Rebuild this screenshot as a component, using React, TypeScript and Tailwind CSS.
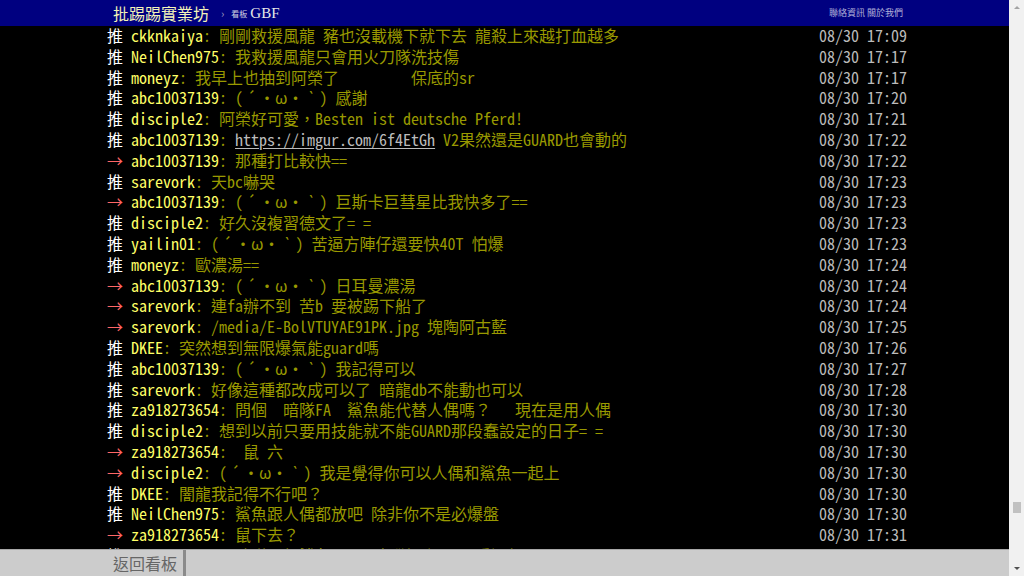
import React from 'react';

interface Push {
  tag: '推' | '→';
  user: string;
  text: string;
  time: string;
  link?: string;
  face?: boolean;
}

const pushes: Push[] = [
  { tag: '推', user: 'ckknkaiya', text: '剛剛救援風龍 豬也沒載機下就下去 龍殺上來越打血越多', time: '17:09' },
  { tag: '推', user: 'NeilChen975', text: '我救援風龍只會用火刀隊洗技傷', time: '17:17' },
  { tag: '推', user: 'moneyz', text: '我早上也抽到阿榮了         保底的sr', time: '17:17' },
  { tag: '推', user: 'abc10037139', face: true, text: ' 感謝', time: '17:20' },
  { tag: '推', user: 'disciple2', text: '阿榮好可愛，Besten ist deutsche Pferd!', time: '17:21' },
  { tag: '推', user: 'abc10037139', link: 'https://imgur.com/6f4EtGh', text: ' V2果然還是GUARD也會動的', time: '17:22' },
  { tag: '→', user: 'abc10037139', text: '那種打比較快==', time: '17:22' },
  { tag: '推', user: 'sarevork', text: '天bc嚇哭', time: '17:23' },
  { tag: '→', user: 'abc10037139', face: true, text: ' 巨斯卡巨彗星比我快多了==', time: '17:23' },
  { tag: '推', user: 'disciple2', text: '好久沒複習德文了= =', time: '17:23' },
  { tag: '推', user: 'yailin01', face: true, text: ' 苦逼方陣仔還要快40T 怕爆', time: '17:23' },
  { tag: '推', user: 'moneyz', text: '歐濃湯==', time: '17:24' },
  { tag: '→', user: 'abc10037139', face: true, text: ' 日耳曼濃湯', time: '17:24' },
  { tag: '→', user: 'sarevork', text: '連fa辦不到 苦b 要被踢下船了', time: '17:24' },
  { tag: '→', user: 'sarevork', text: '/media/E-BolVTUYAE91PK.jpg 塊陶阿古藍', time: '17:25' },
  { tag: '推', user: 'DKEE', text: '突然想到無限爆氣能guard嗎', time: '17:26' },
  { tag: '推', user: 'abc10037139', face: true, text: ' 我記得可以', time: '17:27' },
  { tag: '推', user: 'sarevork', text: '好像這種都改成可以了 暗龍db不能動也可以', time: '17:28' },
  { tag: '推', user: 'za918273654', text: '問個  暗隊FA  鯊魚能代替人偶嗎？   現在是用人偶', time: '17:30' },
  { tag: '推', user: 'disciple2', text: '想到以前只要用技能就不能GUARD那段蠢設定的日子= =', time: '17:30' },
  { tag: '→', user: 'za918273654', text: ' 鼠 六', time: '17:30' },
  { tag: '→', user: 'disciple2', face: true, text: ' 我是覺得你可以人偶和鯊魚一起上', time: '17:30' },
  { tag: '推', user: 'DKEE', text: '闇龍我記得不行吧？', time: '17:30' },
  { tag: '推', user: 'NeilChen975', text: '鯊魚跟人偶都放吧 除非你不是必爆盤', time: '17:30' },
  { tag: '→', user: 'za918273654', text: '鼠下去？', time: '17:31' },
  { tag: '推', user: 'abc10037139', text: '暗隊那個鯊魚是可以打斷嗎還是要看運氣吧', time: '17:31' },
];

// (´・ω・`) with the accents taking a full cell each, as in the big5 font
const Face = () => (
  <>
    (<span className="inline-block w-[16px] text-center">´</span>・ω・<span className="inline-block w-[16px] text-center">`</span>)
  </>
);

const PushRow = ({ p }: { p: Push }) => (
  <div className="flex justify-between h-[20.8px] leading-[20.8px] whitespace-pre">
    <span>
      <span className={p.tag === '推' ? 'text-white' : 'text-[#ff6666]'}>{p.tag} </span>
      <span className="text-[#ffff66]">{p.user}</span>
      <span className="text-[#999900]">
        {': '}
        {p.link && <span className="text-[#bbbbbb] underline underline-offset-2">{p.link}</span>}
        {p.face && <Face />}
        {p.text}
      </span>
    </span>
    <span className="text-[#bbbbbb]">08/30 {p.time}</span>
  </div>
);

export default function App() {
  return (
    <div className="flex w-[1024px] h-[576px] overflow-hidden bg-black font-['Noto_Sans_Mono_CJK_TC','Noto_Sans_CJK_TC',monospace]">
      <div className="relative flex-1 flex flex-col overflow-hidden">
        {/* top bar */}
        <div className="h-[26px] shrink-0 bg-[#000080] flex items-center justify-between pl-[113px] pr-[106px]">
          <div className="flex items-center">
            <span className="text-[16px] text-[#f3f3b8]">批踢踢實業坊</span>
            <span className="ml-[12px] text-[11px] text-[#a0a0c0]">›</span>
            <span className="ml-[7px] mt-[2px] text-[8px] text-[#d0d0e0] font-['Noto_Sans_CJK_TC',sans-serif]">看板</span>
            <span className="ml-[3px] text-[15px] text-[#e8e8e8] font-['Liberation_Serif',serif]">GBF</span>
          </div>
          <div className="flex gap-[2px] text-[9px] text-[#b0b0d8] font-['Noto_Sans_CJK_TC',sans-serif]">
            <span>聯絡資訊</span>
            <span>關於我們</span>
          </div>
        </div>

        {/* pushes */}
        <div className="-mt-[1px] ml-[107px] w-[800px] text-[16px]">
          {pushes.map((p, i) => (
            <PushRow key={i} p={p} />
          ))}
        </div>

        {/* bottom bar */}
        <div className="absolute left-0 right-0 bottom-0 h-[27px] bg-[#cccccc] border-t border-[#a8a8a8] flex">
          <div className="ml-[107px] px-[6px] border-r-[3px] border-[#8a8a8a] flex items-center text-[16px] text-[#666666] font-['Noto_Sans_CJK_TC',sans-serif]">
            返回看板
          </div>
        </div>
      </div>

      {/* scrollbar */}
      <div className="w-[15px] shrink-0 bg-[#f1f1f1] flex flex-col">
        <div className="h-[15px] flex items-center justify-center">
          <div className="w-0 h-0 border-l-[3px] border-r-[3px] border-b-[3px] border-l-transparent border-r-transparent border-b-[#a3a3a3]" />
        </div>
        <div className="flex-1 flex flex-col justify-end pb-[48px]">
          <div className="mx-auto w-[8px] h-[11px] bg-[#c1c1c1]" />
        </div>
        <div className="h-[15px] flex items-center justify-center">
          <div className="w-0 h-0 border-l-[3px] border-r-[3px] border-t-[3px] border-l-transparent border-r-transparent border-t-[#505050]" />
        </div>
      </div>
    </div>
  );
}
